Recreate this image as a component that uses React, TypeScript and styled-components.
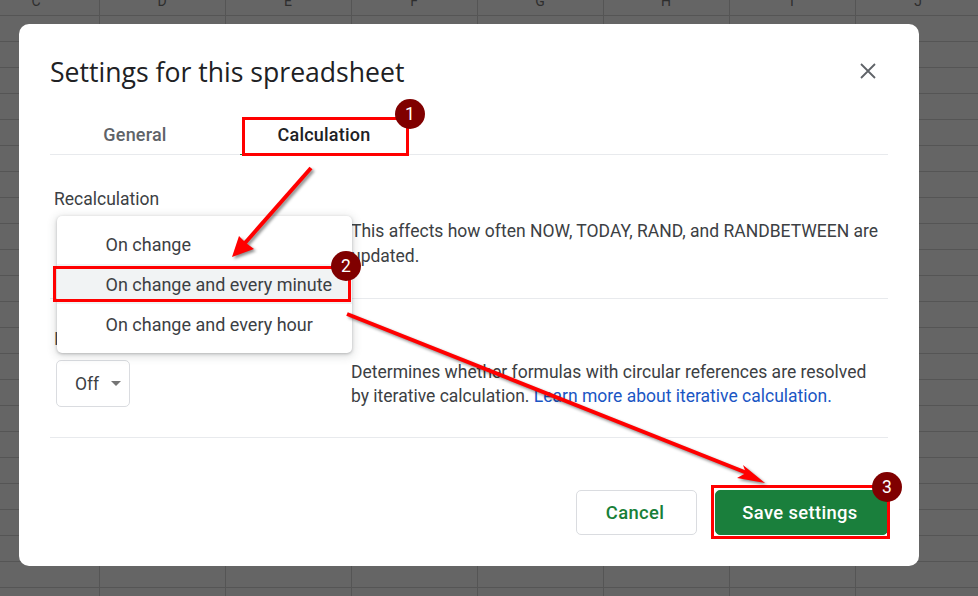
import React from "react";
import styled, { createGlobalStyle } from "styled-components";

const Global = createGlobalStyle`
  html, body { margin: 0; padding: 0; width: 100%; height: 100%; overflow: hidden; }
  body { font-family: Roboto, "Liberation Sans", sans-serif; color: #3c4043; }
  * { box-sizing: border-box; }
`;

const Sheet = styled.div`
  position: relative;
  width: 978px;
  height: 596px;
  overflow: hidden;
  padding: 24px 59px 30px 19px;
  background-color: #656565;
  background-image:
    linear-gradient(to right, #555 1px, transparent 1px),
    linear-gradient(to bottom, #555 1px, transparent 1px);
  background-size: 126px 26px;
  background-position: 99px 15px;
`;

const ColumnHeads = styled.div`
  position: absolute;
  top: -7px;
  left: -27px;
  display: flex;
  font-size: 14px;
  line-height: 16px;
  color: #2e2e2e;
`;

const ColumnHead = styled.span`
  width: 126px;
  text-align: center;
`;

const Dialog = styled.section`
  position: relative;
  width: 900px;
  height: 542px;
  display: flex;
  flex-direction: column;
  padding: 0 31px 31px;
  background: #fff;
  border-radius: 10px;
`;

const Header = styled.header`
  height: 94px;
  display: flex;
  align-items: center;
  justify-content: space-between;
  padding: 0 12px 1px 0;
`;

const Title = styled.h1`
  margin: 2px 0 0;
  font-family: "Open Sans", sans-serif;
  font-size: 26.6px;
  font-weight: 400;
  line-height: 32px;
  color: #202124;
`;

const CloseButton = styled.button`
  width: 16px;
  height: 16px;
  display: flex;
  padding: 0;
  border: 0;
  background: none;
`;

const TabBar = styled.nav`
  height: 37px;
  display: flex;
  flex: none;
  border-bottom: 1px solid #e8eaed;
`;

const Tab = styled.div<{ $active?: boolean; $width: number; $shiftLeft?: number }>`
  width: ${(p) => p.$width}px;
  display: flex;
  align-items: center;
  justify-content: center;
  padding: 0 ${(p) => p.$shiftLeft ?? 0}px 3px 0;
  font-size: 18px;
  font-weight: 500;
  letter-spacing: 0.2px;
  color: ${(p) => (p.$active ? "#202124" : "#5f6368")};
  box-shadow: ${(p) => (p.$active ? "0 1px 0 #188038" : "none")};
`;

const Section = styled.div<{ $height: number; $top: number; $gap: number }>`
  height: ${(p) => p.$height}px;
  flex: none;
  display: grid;
  grid-template-columns: 297px 1fr;
  grid-template-rows: 20px auto;
  row-gap: ${(p) => p.$gap}px;
  padding: ${(p) => p.$top}px 0 0 4px;
  border-bottom: 1px solid #e8eaed;
`;

const SectionLabel = styled.div`
  grid-column: 1 / 3;
  font-size: 17.5px;
  line-height: 20px;
  color: #3c4043;
`;

const Description = styled.p<{ $lineHeight: number }>`
  margin: 0;
  font-size: 17.5px;
  line-height: ${(p) => p.$lineHeight}px;
  color: #3c4043;
`;

const Link = styled.a`
  color: #1a56c4;
  text-decoration: none;
`;

const SelectBox = styled.div`
  width: 74px;
  height: 47px;
  display: flex;
  align-items: center;
  justify-content: space-between;
  padding: 0 8px 0 18px;
  margin-left: 2px;
  border: 1px solid #dadce0;
  border-radius: 5px;
  font-size: 17.5px;
  color: #3c4043;
`;

const Caret = styled.span`
  width: 0;
  height: 0;
  border-left: 5px solid transparent;
  border-right: 5px solid transparent;
  border-top: 5px solid #757575;
`;

const Menu = styled.ul`
  position: absolute;
  left: 38px;
  top: 192px;
  width: 295px;
  height: 137px;
  margin: 0;
  padding: 8px 0;
  list-style: none;
  background: #fff;
  border-radius: 5px;
  box-shadow: 0 1px 3px rgba(60, 64, 67, 0.3), 0 2px 8px 2px rgba(60, 64, 67, 0.15);
`;

const MenuItem = styled.li<{ $hover?: boolean }>`
  height: 40px;
  display: flex;
  align-items: center;
  padding-left: 48.5px;
  font-size: 18px;
  color: #3c4043;
  background: ${(p) => (p.$hover ? "#f1f3f4" : "transparent")};
`;

const Footer = styled.footer`
  flex: 1;
  display: flex;
  justify-content: flex-end;
  align-items: flex-end;
  gap: 18px;
`;

const Button = styled.button<{ $primary?: boolean; $width: number }>`
  width: ${(p) => p.$width}px;
  height: 45px;
  padding: 0 3px 0 0;
  border: 1px solid ${(p) => (p.$primary ? "#1a7f3c" : "#dadce0")};
  border-radius: 5px;
  background: ${(p) => (p.$primary ? "#1a7f3c" : "#fff")};
  color: ${(p) => (p.$primary ? "#fff" : "#188038")};
  font-family: Roboto, sans-serif;
  font-size: 18.4px;
  font-weight: 500;
  letter-spacing: 0.35px;
`;

const Annotations = styled.svg`
  position: absolute;
  inset: 0;
  width: 978px;
  height: 596px;
  pointer-events: none;
`;

const ArrowGroup = styled.g`
  filter: drop-shadow(2px 2px 1.5px rgba(0, 0, 0, 0.45));
`;

const BadgeText = styled.text`
  font-family: Roboto, sans-serif;
  font-size: 17.5px;
  fill: #fff;
  text-anchor: middle;
`;

const columns = ["C", "D", "E", "F", "G", "H", "I", "J"];

const Badge = ({ x, y, n }: { x: number; y: number; n: number }) => (
  <g>
    <circle cx={x} cy={y} r={15} fill="#800000" />
    <BadgeText x={x} y={y + 6}>{n}</BadgeText>
  </g>
);

export default function App() {
  return (
    <>
      <Global />
      <Sheet>
        <ColumnHeads>
          {columns.map((c) => (
            <ColumnHead key={c}>{c}</ColumnHead>
          ))}
        </ColumnHeads>
        <Dialog>
          <Header>
            <Title>Settings for this spreadsheet</Title>
            <CloseButton aria-label="Close">
              <svg width="16" height="16" viewBox="0 0 16 16">
                <path d="M1 1 L15 15 M15 1 L1 15" stroke="#5f6368" strokeWidth="1.8" fill="none" />
              </svg>
            </CloseButton>
          </Header>
          <TabBar>
            <Tab $width={190} $shiftLeft={20}>General</Tab>
            <Tab $width={168} $active>Calculation</Tab>
          </TabBar>
          <Section $height={144} $top={34} $gap={10}>
            <SectionLabel>Recalculation</SectionLabel>
            <span />
            <Description $lineHeight={25}>
              This affects how often NOW, TODAY, RAND, and RANDBETWEEN are
              <br />
              updated.
            </Description>
          </Section>
          <Section $height={139} $top={30} $gap={11}>
            <SectionLabel>Iterative calculation</SectionLabel>
            <SelectBox>
              Off
              <Caret />
            </SelectBox>
            <Description $lineHeight={24}>
              Determines whether formulas with circular references are resolved
              <br />
              by iterative calculation. <Link>Learn more about iterative calculation.</Link>
            </Description>
          </Section>
          <Footer>
            <Button $width={121}>Cancel</Button>
            <Button $width={173} $primary>Save settings</Button>
          </Footer>
          <Menu>
            <MenuItem>On change</MenuItem>
            <MenuItem $hover>On change and every minute</MenuItem>
            <MenuItem>On change and every hour</MenuItem>
          </Menu>
        </Dialog>
        <Annotations viewBox="0 0 978 596">
          <g fill="none" stroke="#f00" strokeWidth="3">
            <rect x="243.5" y="118.5" width="164" height="36" />
            <rect x="54.5" y="267.5" width="295" height="33" />
            <rect x="712.5" y="486.5" width="176" height="51" />
          </g>
          <ArrowGroup>
            <path d="M311 168 L245 243" stroke="#f00" strokeWidth="4" fill="none" />
            <path d="M232 257 L239 236 L246 243 L254 249 Z" fill="#f00" />
            <path d="M347 314 L747 473" stroke="#f00" strokeWidth="4" fill="none" />
            <path d="M765 483 L743 465 L746 473 L737 478 Z" fill="#f00" />
          </ArrowGroup>
          <Badge x={410} y={114} n={1} />
          <Badge x={346} y={266} n={2} />
          <Badge x={887} y={487} n={3} />
        </Annotations>
      </Sheet>
    </>
  );
}
